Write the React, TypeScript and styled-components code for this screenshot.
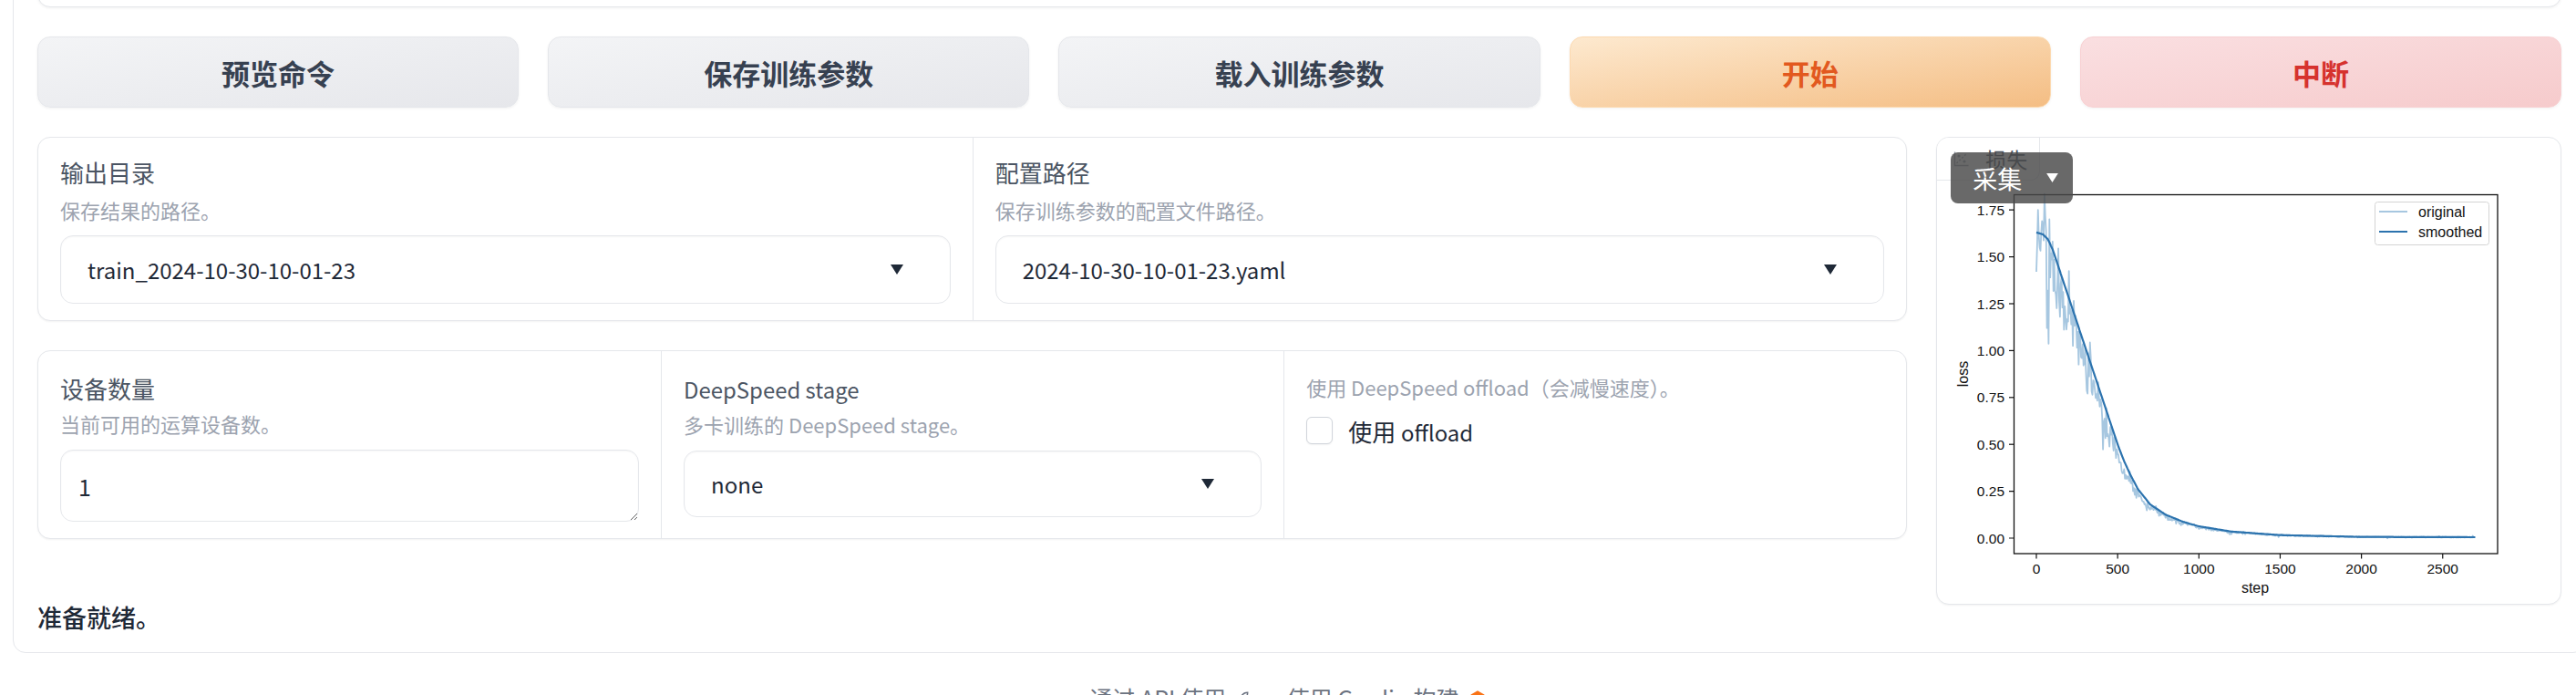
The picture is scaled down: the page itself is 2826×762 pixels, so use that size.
import React from "react";
import styled, { createGlobalStyle } from "styled-components";

const GlobalStyle = createGlobalStyle`
  html, body {
    margin: 0;
    padding: 0;
    background: #ffffff;
    overflow: hidden;
  }
  body {
    font-family: "Noto Sans CJK SC", "Noto Sans", sans-serif;
    color: #1f2937;
  }
`;

const Page = styled.div`
  width: 2826px;
  height: 762px;
  overflow: hidden;
`;

const Shell = styled.div`
  box-sizing: border-box;
  width: 2823px;
  margin: -60px 0 0 14px;
  padding: 20px 26px 22px;
  border: 1px solid #e5e7eb;
  border-radius: 14px;
  display: flex;
  flex-direction: column;
  gap: 32px;
`;

const TopStub = styled.div`
  box-sizing: border-box;
  height: 47px;
  background: #fff;
  border: 1px solid #e5e7eb;
  border-radius: 14px;
  box-shadow: 0 1px 3px rgba(0, 0, 0, 0.06);
`;

const ButtonRow = styled.div`
  display: grid;
  grid-template-columns: repeat(5, 1fr);
  gap: 32px;
`;

const tones = {
  secondary: {
    bg: "linear-gradient(to bottom right, #f3f4f6, #e6e7eb)",
    border: "#e5e7eb",
    color: "#374151",
  },
  primary: {
    bg: "linear-gradient(to bottom right, #fde9cf, #f4bd83)",
    border: "#fcd9b0",
    color: "#e2591f",
  },
  stop: {
    bg: "linear-gradient(to bottom right, #fadfe1, #f6cbcc)",
    border: "#f8d0d2",
    color: "#d6322e",
  },
};

type Tone = keyof typeof tones;

const ActionButton = styled.button<{ $tone: Tone }>`
  box-sizing: border-box;
  height: 78px;
  border-radius: 14px;
  border: 1px solid ${(p) => tones[p.$tone].border};
  background: ${(p) => tones[p.$tone].bg};
  color: ${(p) => tones[p.$tone].color};
  font-family: "Noto Sans CJK SC", sans-serif;
  font-size: 31px;
  font-weight: 700;
  box-shadow: 0 1px 3px rgba(0, 0, 0, 0.06);
  cursor: pointer;
`;

const MainArea = styled.div`
  display: flex;
  flex-direction: column;
`;

const Row = styled.div`
  display: flex;
  gap: 32px;
  align-items: flex-start;
`;

const LeftCol = styled.div`
  flex: 3 1 0;
  min-width: 0;
  display: flex;
  flex-direction: column;
  gap: 32px;
`;

const FormBox = styled.div<{ $cols: number }>`
  display: grid;
  grid-template-columns: repeat(${(p) => p.$cols}, 1fr);
  border: 1px solid #e5e7eb;
  border-radius: 14px;
  background: #fff;
  box-shadow: 0 1px 2px rgba(0, 0, 0, 0.05);
  overflow: hidden;
`;

const Field = styled.div<{ $top: number; $bottom: number }>`
  padding: ${(p) => p.$top}px 24px ${(p) => p.$bottom}px 24px;
  display: flex;
  flex-direction: column;
  & + & {
    border-left: 1px solid #e5e7eb;
  }
`;

const Label = styled.div`
  font-size: 26px;
  line-height: 34px;
  color: #4b5563;
`;

// latin runs in the 26px texts are set a little tighter, as in the capture
const Latin = styled.span`
  font-size: 0.92em;
`;

const Info = styled.div<{ $gap?: number }>`
  font-size: 22px;
  line-height: 30px;
  color: #9ca3af;
  margin-top: ${(p) => p.$gap ?? 0}px;
`;

const Dropdown = styled.div<{ $h: number; $gap: number }>`
  box-sizing: border-box;
  height: ${(p) => p.$h}px;
  margin-top: ${(p) => p.$gap}px;
  padding: 0 51px 0 29px;
  border: 1px solid #e5e7eb;
  border-radius: 14px;
  background: #fff;
  box-shadow: inset 0 1px 2px rgba(0, 0, 0, 0.04);
  display: flex;
  align-items: center;
  justify-content: space-between;
  font-size: 24px;
  color: #1f2937;
`;

const TextArea = styled.textarea`
  box-sizing: border-box;
  display: block;
  width: 100%;
  height: 79px;
  margin-top: 14px;
  padding: 22px 19px;
  border: 1px solid #e5e7eb;
  border-radius: 14px;
  box-shadow: inset 0 1px 2px rgba(0, 0, 0, 0.04);
  font-family: "Noto Sans CJK SC", sans-serif;
  font-size: 25px;
  line-height: 34px;
  color: #1f2937;
  resize: vertical;
  outline: none;
`;

const CheckRow = styled.label`
  display: flex;
  align-items: center;
  gap: 17px;
  margin-top: 16px;
  height: 34px;
  font-size: 26px;
  color: #1f2937;
`;

const CheckBox = styled.span`
  box-sizing: border-box;
  width: 29px;
  height: 30px;
  border: 1px solid #d1d5db;
  border-radius: 6px;
  background: #fff;
  box-shadow: 0 1px 2px rgba(0, 0, 0, 0.05);
`;

const ChartPanel = styled.div`
  flex: 1 1 0;
  min-width: 0;
  position: relative;
  box-sizing: border-box;
  height: 513px;
  border: 1px solid #e5e7eb;
  border-radius: 14px;
  background: #fff;
  box-shadow: 0 1px 2px rgba(0, 0, 0, 0.05);
  overflow: hidden;
`;

const BlockLabel = styled.div`
  position: absolute;
  top: 0;
  left: 0;
  box-sizing: border-box;
  width: 113px;
  height: 47px;
  padding-left: 18px;
  display: flex;
  align-items: center;
  gap: 17px;
  border-right: 1px solid #e5e7eb;
  border-bottom: 1px solid #e5e7eb;
  border-radius: 0 0 10px 0;
  background: #fff;
  font-size: 23px;
  color: #4b5563;
`;

const Capture = styled.div`
  position: absolute;
  top: 16px;
  left: 15px;
  box-sizing: border-box;
  width: 134px;
  height: 56px;
  padding-left: 24px;
  display: flex;
  align-items: center;
  gap: 26px;
  border-radius: 8px;
  background: rgba(72, 72, 72, 0.82);
  color: #fff;
  font-size: 27px;
  z-index: 2;
`;

const ChartSvg = styled.svg`
  display: block;
`;

const Status = styled.div`
  font-size: 27px;
  line-height: 32px;
  font-weight: 500;
  color: #1f2937;
  margin-top: -2px;
`;

const Footer = styled.div`
  margin-top: 33px;
  display: flex;
  justify-content: center;
  align-items: center;
  gap: 10px;
  font-size: 25px;
  line-height: 32px;
  color: #6b7280;
`;

const Caret = ({ color = "#1f2937", w = 14, h = 11 }: { color?: string; w?: number; h?: number }) => (
  <svg width={w} height={h} viewBox="0 0 14 11">
    <path d="M0 0 H14 L7 11 Z" fill={color} />
  </svg>
);

const PlotIcon = () => (
  <svg width="18" height="18" viewBox="0 0 18 18" fill="none" stroke="#9ca3af" strokeWidth="1.4">
    <path d="M1.5 1.5 V16.5 H16.5" />
    <path d="M3.5 14 L15 3" strokeDasharray="2 2" />
    <circle cx="6" cy="6" r="0.9" fill="#9ca3af" />
    <circle cx="12" cy="12" r="0.9" fill="#9ca3af" />
  </svg>
);

// --- loss curve -------------------------------------------------------------
const knots: [number, number][] = [
  [0, 1.63], [40, 1.62], [70, 1.595], [100, 1.54], [500, 0.5], [540, 0.41],
  [580, 0.335], [626, 0.26], [700, 0.18], [795, 0.125], [900, 0.088],
  [1000, 0.063], [1200, 0.035], [1500, 0.016], [2000, 0.0065], [2703, 0.005],
];

const smooth = (s: number) => {
  if (s <= knots[0][0]) return knots[0][1];
  for (let i = 1; i < knots.length; i++) {
    const [x1, y1] = knots[i];
    const [x0, y0] = knots[i - 1];
    if (s <= x1) return y0 + ((s - x0) / (x1 - x0)) * (y1 - y0);
  }
  return knots[knots.length - 1][1];
};

const rng = (() => {
  let a = 98765;
  return () => {
    a |= 0;
    a = (a + 0x6d2b79f5) | 0;
    let t = Math.imul(a ^ (a >>> 15), 1 | a);
    t = (t + Math.imul(t ^ (t >>> 7), 61 | t)) ^ t;
    return ((t ^ (t >>> 14)) >>> 0) / 4294967296;
  };
})();

const px = (s: number) => 2236 + s * 0.1783;
const py = (v: number) => 590 - v * 205.6;

const steps: number[] = [];
for (let s = 0; s <= 2703; s += 5) steps.push(s);

const smoothPath = steps.map((s, i) => `${i ? "L" : "M"}${px(s).toFixed(1)} ${py(smooth(s)).toFixed(1)}`).join(" ");

// a few hand-placed spikes near the start, as in the capture
const spikes: Record<number, number> = { 0: 1.42, 10: 1.75, 20: 1.55, 35: 1.69, 65: 1.12, 80: 1.7, 120: 1.3 };

const originalPath = steps
  .map((s, i) => {
    const base = smooth(s + 25);
    let amp = 0.16 * (base + 0.015);
    if (rng() < 0.08) amp *= 2.6;
    const n = (rng() + rng() - 1.1) * amp;
    const v = spikes[s] ?? Math.max(-0.005, base + n);
    return `${i ? "L" : "M"}${px(s).toFixed(1)} ${py(v).toFixed(1)}`;
  })
  .join(" ");

const yTicks = [0, 0.25, 0.5, 0.75, 1, 1.25, 1.5, 1.75];
const xTicks = [0, 500, 1000, 1500, 2000, 2500];

const LossChart = () => (
  <ChartSvg width={682} height={511} viewBox="2127 151 682 511" fontFamily="'Liberation Sans', sans-serif">
    <path d={originalPath} fill="none" stroke="#a7c7e0" strokeWidth="1.8" strokeLinejoin="round" />
    <path d={smoothPath} fill="none" stroke="#2c73ae" strokeWidth="2.2" strokeLinejoin="round" />
    <rect x={2211.5} y={213.5} width={530.5} height={393.5} fill="none" stroke="#111" strokeWidth="1.3" />
    {yTicks.map((v) => (
      <g key={v}>
        <line x1={2206} x2={2211.5} y1={py(v)} y2={py(v)} stroke="#111" strokeWidth="1.2" />
        <text x={2201} y={py(v) + 5.5} fontSize="15.5" textAnchor="end" fill="#111">
          {v.toFixed(2)}
        </text>
      </g>
    ))}
    {xTicks.map((s) => (
      <g key={s}>
        <line x1={px(s)} x2={px(s)} y1={607} y2={612.5} stroke="#111" strokeWidth="1.2" />
        <text x={px(s)} y={629} fontSize="15.5" textAnchor="middle" fill="#111">
          {s}
        </text>
      </g>
    ))}
    <text x={2476} y={650} fontSize="16" textAnchor="middle" fill="#111">
      step
    </text>
    <text x={2155} y={410} fontSize="16" textAnchor="middle" dominantBaseline="central" transform="rotate(-90 2155 410)" fill="#111">
      loss
    </text>
    <rect x={2607.5} y={221.5} width={125} height={47} rx={3} fill="#fff" stroke="#d4d4d4" />
    <line x1={2612} x2={2643} y1={232} y2={232} stroke="#a7c7e0" strokeWidth="2" />
    <text x={2655} y={232} fontSize="16" dominantBaseline="central" fill="#111">
      original
    </text>
    <line x1={2612} x2={2643} y1={254} y2={254} stroke="#2c73ae" strokeWidth="2" />
    <text x={2655} y={254} fontSize="16" dominantBaseline="central" fill="#111">
      smoothed
    </text>
  </ChartSvg>
);

const Rocket = () => (
  <svg width="16" height="16" viewBox="0 0 14 14">
    <path d="M2 12 L5 7 L7 9 Z M5 7 C7 3 10 2 12 2 C12 4 11 7 7 9" fill="none" stroke="#6b7280" strokeWidth="1.3" />
  </svg>
);

const GradioLogo = () => (
  <svg width="20" height="20" viewBox="0 0 18 18">
    <path d="M9 2 L16 6 L9 10 L2 6 Z" fill="#f97316" />
    <path d="M2 10 L9 14 L16 10" fill="none" stroke="#f97316" strokeWidth="2" />
  </svg>
);

export default function App() {
  return (
    <Page>
      <GlobalStyle />
      <Shell>
        <TopStub />
        <ButtonRow>
          <ActionButton $tone="secondary">预览命令</ActionButton>
          <ActionButton $tone="secondary">保存训练参数</ActionButton>
          <ActionButton $tone="secondary">载入训练参数</ActionButton>
          <ActionButton $tone="primary">开始</ActionButton>
          <ActionButton $tone="stop">中断</ActionButton>
        </ButtonRow>
        <MainArea>
          <Row>
            <LeftCol>
              <FormBox $cols={2}>
                <Field $top={21} $bottom={18}>
                  <Label>输出目录</Label>
                  <Info $gap={9}>保存结果的路径。</Info>
                  <Dropdown $h={75} $gap={13}>
                    <span>train_2024-10-30-10-01-23</span>
                    <Caret />
                  </Dropdown>
                </Field>
                <Field $top={21} $bottom={18}>
                  <Label>配置路径</Label>
                  <Info $gap={9}>保存训练参数的配置文件路径。</Info>
                  <Dropdown $h={75} $gap={13}>
                    <span>2024-10-30-10-01-23.yaml</span>
                    <Caret />
                  </Dropdown>
                </Field>
              </FormBox>
              <FormBox $cols={3}>
                <Field $top={24} $bottom={18}>
                  <Label>设备数量</Label>
                  <Info $gap={6}>当前可用的运算设备数。</Info>
                  <TextArea defaultValue="1" rows={1} />
                </Field>
                <Field $top={24} $bottom={18}>
                  <Label>
                    <Latin>DeepSpeed stage</Latin>
                  </Label>
                  <Info $gap={6}>多卡训练的 DeepSpeed stage。</Info>
                  <Dropdown $h={73} $gap={14}>
                    <span>none</span>
                    <Caret />
                  </Dropdown>
                </Field>
                <Field $top={24} $bottom={18}>
                  <Info>使用 DeepSpeed offload（会减慢速度）。</Info>
                  <CheckRow>
                    <CheckBox />
                    <span>
                      使用 <Latin>offload</Latin>
                    </span>
                  </CheckRow>
                </Field>
              </FormBox>
            </LeftCol>
            <ChartPanel>
              <BlockLabel>
                <PlotIcon />
                <span>损失</span>
              </BlockLabel>
              <Capture>
                <span>采集</span>
                <Caret color="#fff" w={15} h={10} />
              </Capture>
              <LossChart />
            </ChartPanel>
          </Row>
          <Status>准备就绪。</Status>
        </MainArea>
      </Shell>
      <Footer>
        <span>通过 API 使用</span>
        <Rocket />
        <span>· 使用 Gradio 构建</span>
        <GradioLogo />
      </Footer>
    </Page>
  );
}
